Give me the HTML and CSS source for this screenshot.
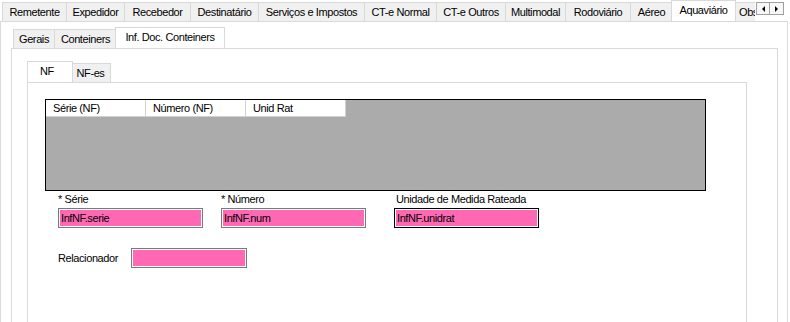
FILE: index.html
```html
<!DOCTYPE html>
<html lang="pt">
<head>
    <meta charset="UTF-8">
    <title>Aquaviário</title>
    <link rel="stylesheet" href="styles.css">
</head>
<body>

    <div class="tabs outer">
        <div class="tab-strip">
            <div class="tab">Remetente</div>
            <div class="tab">Expedidor</div>
            <div class="tab">Recebedor</div>
            <div class="tab">Destinatário</div>
            <div class="tab">Serviços e Impostos</div>
            <div class="tab">CT-e Normal</div>
            <div class="tab">CT-e Outros</div>
            <div class="tab">Multimodal</div>
            <div class="tab">Rodoviário</div>
            <div class="tab">Aéreo</div>
            <div class="tab active">Aquaviário</div>
            <div class="tab">Observações</div>
            <div class="scroll-btns">
                <span class="scroll-btn"><span class="arrow left"></span></span>
                <span class="scroll-btn"><span class="arrow right"></span></span>
            </div>
        </div>

        <div class="tab-page outer-page">
            <div class="tabs inner">
                <div class="tab-strip">
                    <div class="tab">Gerais</div>
                    <div class="tab">Conteiners</div>
                    <div class="tab active">Inf. Doc. Conteiners</div>
                </div>

                <div class="tab-page inner-page">
                    <div class="tabs nf">
                        <div class="tab-strip">
                            <div class="tab active">NF</div>
                            <div class="tab">NF-es</div>
                        </div>

                        <div class="tab-page nf-page">
                            <div class="grid">
                                <div class="grid-head">
                                    <div class="col">Série (NF)</div>
                                    <div class="col">Número (NF)</div>
                                    <div class="col">Unid Rat</div>
                                </div>
                            </div>

                            <div class="fields">
                                <div class="field f-serie">
                                    <label>* Série</label>
                                    <div class="input">InfNF.serie</div>
                                </div>
                                <div class="field f-num">
                                    <label>* Número</label>
                                    <div class="input">InfNF.num</div>
                                </div>
                                <div class="field f-unid">
                                    <label>Unidade de Medida Rateada</label>
                                    <div class="input focused">InfNF.unidrat</div>
                                </div>
                            </div>

                            <div class="rel-row">
                                <label>Relacionador</label>
                                <div class="input rel"></div>
                            </div>
                        </div>
                    </div>
                </div>
            </div>
        </div>
    </div>

</body>
</html>
```

FILE: styles.css
```css
* {
    box-sizing: border-box;
}

body {
    margin: 0;
    width: 790px;
    height: 322px;
    overflow: hidden;
    background: #fff;
    font-family: "Liberation Sans", Arial, sans-serif;
    font-size: 11px;
    letter-spacing: -0.4px;
    color: #000;
}

/* tab strips */
.tab-strip {
    display: flex;
    align-items: flex-end;
    padding-left: 2px;
    position: relative;
    overflow: hidden;
    white-space: nowrap;
}

.tab {
    flex: none;
    height: 18px;
    padding-top: 1px;
    line-height: 15px;
    text-align: center;
    background: #f0f0f0;
    border-top: 1px solid #d9d9d9;
    border-right: 1px solid #d9d9d9;
    overflow: hidden;
}

.tab:first-child {
    border-left: 1px solid #d9d9d9;
}

.tab.active {
    position: relative;
    z-index: 1;
    height: 21px;
    margin: 0 -2px -1px;
    background: #fff;
    border-left: 1px solid #d9d9d9;
}

.tab-page {
    border: 1px solid #d9d9d9;
    border-bottom: none;
    background: #fff;
}

/* outer tabs (CT-e) */
.outer .tab-strip > .tab {
    height: 19px;
    line-height: 16px;
}
.outer .tab-strip > .tab.active {
    height: 22px;
}
.outer .tab:nth-child(1) { width: 65px; }
.outer .tab:nth-child(2) { width: 58px; }
.outer .tab:nth-child(3) { width: 66px; }
.outer .tab:nth-child(4) { width: 68px; }
.outer .tab:nth-child(5) { width: 106px; }
.outer .tab:nth-child(6) { width: 72px; }
.outer .tab:nth-child(7) { width: 69px; }
.outer .tab:nth-child(8) { width: 60px; }
.outer .tab:nth-child(9) { width: 65px; }
.outer .tab:nth-child(10) { width: 42px; }
.outer .tab:nth-child(11) { width: 65px; }
.outer .tab:nth-child(12) { width: 70px; text-align: left; padding-left: 5px; }

.scroll-btns {
    position: absolute;
    top: 0;
    right: 0;
    width: 35px;
    height: 21px;
    background: #fff;
    display: flex;
    padding-top: 2px;
    padding-left: 1px;
    z-index: 2;
}

.scroll-btn {
    width: 14px;
    height: 13px;
    border: 1px solid #a0a0a0;
    background: #f7f7f7;
    display: flex;
    align-items: center;
    justify-content: center;
}
.scroll-btn + .scroll-btn {
    border-left: none;
}

.arrow {
    width: 0;
    height: 0;
    border-top: 3px solid transparent;
    border-bottom: 3px solid transparent;
}
.arrow.left {
    border-right: 3px solid #000;
}
.arrow.right {
    border-left: 3px solid #000;
}

.outer-page {
    width: 788px;
    height: 301px;
    padding: 5px 9px 0 10px;
}

/* inner tabs (Aquaviário) */
.inner > .tab-strip > .tab:nth-child(1) { width: 42px; }
.inner > .tab-strip > .tab:nth-child(2) { width: 62px; }
.inner > .tab-strip > .tab:nth-child(3) { width: 110px; }

.inner-page {
    height: 275px;
    padding: 12px 30px 0 15px;
}

/* NF tabs */
.nf > .tab-strip > .tab:nth-child(1) { width: 46px; padding-right: 6px; }
.nf > .tab-strip > .tab:nth-child(2) { width: 40px; }

.nf-page {
    height: 242px;
    padding: 16px 0 0 17px;
}

/* grid */
.grid {
    width: 661px;
    height: 92px;
    border: 1px solid #000;
    background: #ababab;
}

.grid-head {
    display: flex;
    width: 300px;
    height: 17px;
    background: #fff;
    border-bottom: 1px solid #d0d0d0;
}

.grid-head .col {
    width: 100px;
    padding: 1px 0 0 7px;
    line-height: 14px;
    border-right: 1px solid #d0d0d0;
}

/* fields */
.fields {
    display: flex;
    margin: 2px 0 0 13px;
}

.field label {
    display: block;
    line-height: 13px;
    margin-bottom: 2px;
}

.f-serie { width: 163px; }
.f-num { width: 173px; }
.f-unid label { padding-left: 2px; }

.input {
    width: 145px;
    height: 20px;
    border: 1px solid #7a7a7a;
    box-shadow: inset 0 0 0 1px #fff;
    background: #ff69b4;
    padding-left: 2px;
    line-height: 18px;
}

.input.focused {
    border-color: #000;
}

.rel-row {
    display: flex;
    align-items: center;
    margin: 20px 0 0 13px;
}

.rel-row label {
    width: 73px;
    flex: none;
}

.input.rel {
    width: 116px;
}
```
